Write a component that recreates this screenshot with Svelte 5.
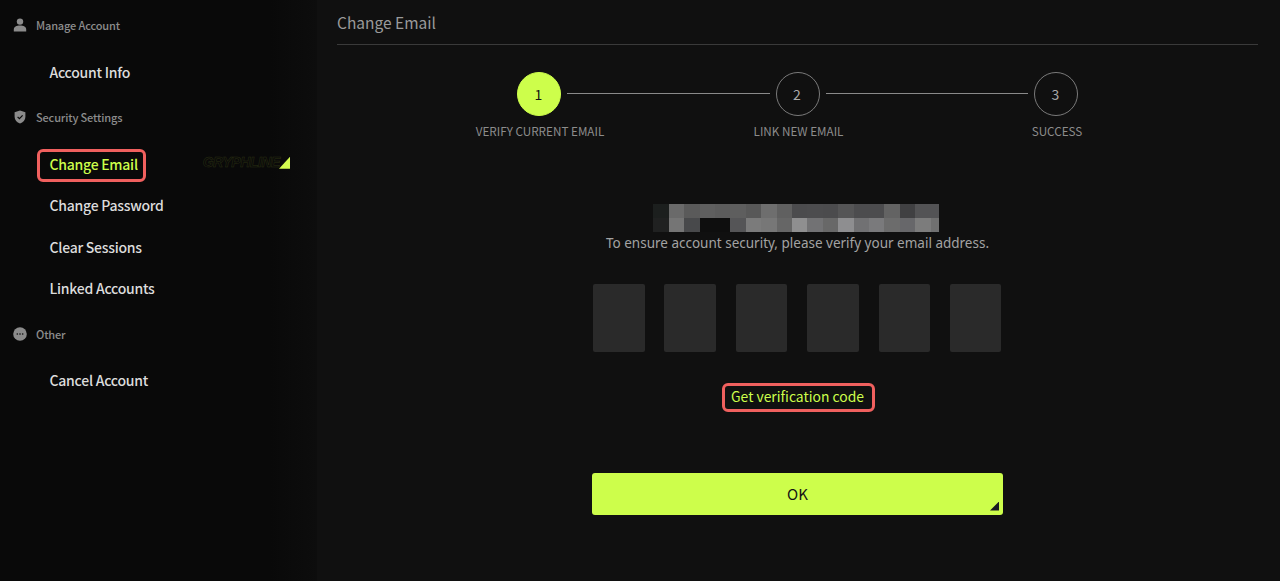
<script>
  const groups = [
    { title: 'Manage Account', icon: 'user', items: ['Account Info'] },
    { title: 'Security Settings', icon: 'shield', items: ['Change Email', 'Change Password', 'Clear Sessions', 'Linked Accounts'] },
    { title: 'Other', icon: 'more', items: ['Cancel Account'] }
  ];
  const steps = ['VERIFY CURRENT EMAIL', 'LINK NEW EMAIL', 'SUCCESS'];
  const mosaic = [
    '#1c1f1e', '#6a6a6a', '#5a5a5a', '#5f5f5f', '#5c5c5c', '#5e5e5e', '#585858', '#6e6e6e', '#606060', '#4b4b4d',
    '#4c4c4e', '#4b4b4d', '#555556', '#4c4c4e', '#4c4c4e', '#636363', '#404042', '#535355', '#535355',
    '#202121', '#757575', '#48494b', '#0e0e0e', '#0e0e0e', '#555557', '#7b7b7b', '#777777', '#666666', '#8f8f90',
    '#727274', '#686868', '#8e8e90', '#717173', '#7a7a7c', '#6c6c6c', '#67676a', '#7c7c7c', '#707070'
  ];
  const codeBoxes = [0, 1, 2, 3, 4, 5];
</script>

<div class="page">
  <aside class="sidebar">
    {#each groups as group}
      <section class="group">
        <h3 class="group-title">
          <span class="group-icon">
            {#if group.icon === 'user'}
              <svg viewBox="0 0 14 14" width="14" height="14">
                <circle cx="7" cy="3.6" r="3.2" fill="#8b8b8b" />
                <path d="M0.8 13.4v-1.9c0-2.6 2.6-3.9 6.2-3.9s6.2 1.3 6.2 3.9v1.9z" fill="#8b8b8b" />
              </svg>
            {:else if group.icon === 'shield'}
              <svg viewBox="0 0 12 14" width="12" height="14">
                <path d="M6 0.4 11.4 2.2v4.6c0 3.2-2.3 5.6-5.4 6.8C2.9 12.4 0.6 10 0.6 6.8V2.2z" fill="#8b8b8b" />
                <path d="M3.6 6.8 5.4 8.6 8.6 5.3" fill="none" stroke="#0b0b0b" stroke-width="1.2" />
              </svg>
            {:else}
              <svg viewBox="0 0 14 14" width="14" height="14">
                <circle cx="7" cy="7" r="6.8" fill="#8b8b8b" />
                <circle cx="4.3" cy="7" r="0.8" fill="#0b0b0b" />
                <circle cx="7" cy="7" r="0.8" fill="#0b0b0b" />
                <circle cx="9.7" cy="7" r="0.8" fill="#0b0b0b" />
              </svg>
            {/if}
          </span>
          {group.title}
        </h3>
        {#each group.items as item}
          <div class="nav-item" class:active={item === 'Change Email'}>
            <span class="nav-label">{item}</span>
            {#if item === 'Change Email'}
              <span class="brand"><span class="brand-text">GRYPHLINE</span><i class="brand-corner"></i></span>
            {/if}
          </div>
        {/each}
      </section>
    {/each}
  </aside>

  <main class="main">
    <h2 class="title">Change Email</h2>

    <div class="stepper">
      {#each steps as step, i}
        {#if i > 0}<div class="line"></div>{/if}
        <div class="step" class:current={i === 0}>
          <div class="circle">{i + 1}</div>
          <div class="step-label">{step}</div>
        </div>
      {/each}
    </div>

    <div class="form">
      <div class="mosaic">
        {#each mosaic as color}
          <i style="background: {color}"></i>
        {/each}
      </div>
      <p class="hint">To ensure account security, please verify your email address.</p>
      <div class="code">
        {#each codeBoxes as box (box)}
          <div class="code-box"></div>
        {/each}
      </div>
      <button class="get-code"><span>Get verification code</span></button>
      <button class="ok">OK<i class="ok-corner"></i></button>
    </div>
  </main>
</div>

<style>
  :global(body) {
    margin: 0;
    background: #101010;
  }

  .page {
    display: flex;
    height: 581px;
    overflow: hidden;
    font-family: "Noto Sans CJK SC", "Noto Sans", sans-serif;
  }

  .sidebar {
    width: 317px;
    flex: none;
    box-sizing: border-box;
    padding: 4px 27px 0 13px;
    background: linear-gradient(90deg, #090909 85%, #0d0d0d);
  }

  .group {
    margin-bottom: 3.5px;
  }

  .group-title {
    display: flex;
    align-items: center;
    height: 42px;
    margin: 0 0 5px;
    font-size: 11px;
    font-weight: 500;
    letter-spacing: -0.15px;
    color: #8c8c8c;
  }

  .group-icon {
    display: flex;
    justify-content: center;
    width: 14px;
    margin-right: 9px;
  }

  .nav-item {
    display: flex;
    align-items: center;
    justify-content: space-between;
    height: 41.5px;
    padding-left: 36.5px;
    font-size: 14px;
    line-height: 20px;
    letter-spacing: -0.25px;
    font-weight: 500;
    color: #dcdcdc;
  }

  .nav-item.active .nav-label {
    position: relative;
    color: #cdfe4b;
  }

  .nav-item.active .nav-label::after {
    content: "";
    position: absolute;
    inset: -5px -8px -8px -13px;
    border: 3px solid #f0605e;
    border-radius: 6px;
  }

  .brand {
    display: flex;
    align-items: flex-end;
    position: relative;
    top: -2px;
  }

  .brand-text {
    font-family: "Liberation Sans", sans-serif;
    font-size: 14px;
    font-style: italic;
    font-weight: 700;
    line-height: 14px;
    letter-spacing: -0.45px;
    color: transparent;
    -webkit-text-stroke: 0.5px #2a3012;
  }

  .brand-corner {
    width: 11px;
    height: 12px;
    margin-left: -1px;
    background: #d3fb4f;
    clip-path: polygon(100% 0, 100% 100%, 0 100%);
  }

  .main {
    flex: 1;
    padding: 0 22px 0 20px;
  }

  .title {
    height: 45px;
    margin: 0;
    box-sizing: border-box;
    border-bottom: 1px solid #3a3a3a;
    padding-top: 10px;
    font-size: 15.5px;
    line-height: 24px;
    font-weight: 400;
    color: #9a9a9a;
  }

  .stepper {
    display: flex;
    align-items: flex-start;
    width: 561px;
    margin: 27px auto 0;
  }

  .step {
    display: flex;
    flex-direction: column;
    align-items: center;
    width: 44px;
    flex: none;
  }

  .circle {
    display: flex;
    align-items: center;
    justify-content: center;
    box-sizing: border-box;
    width: 44px;
    height: 44px;
    padding-right: 1px;
    border: 1px solid #7a7a7a;
    border-radius: 50%;
    font-size: 14px;
    color: #aaaaaa;
  }

  .current .circle {
    border-color: #cdfe4b;
    background: #cdfe4b;
    color: #141414;
  }

  .step-label {
    margin: 6px 0 0 2px;
    font-size: 11.7px;
    line-height: 18px;
    white-space: nowrap;
    color: #8c8c8c;
  }

  .line {
    flex: 1;
    height: 1px;
    margin: 21px 6px 0;
    background: #8a8a8a;
  }

  .form {
    display: flex;
    flex-direction: column;
    align-items: center;
    width: 411px;
    margin: 63.5px auto 0;
  }

  .mosaic {
    display: grid;
    grid-template-columns: repeat(18, 15.4px) 8px;
    grid-auto-rows: 14px;
    flex: none;
    margin-right: 3px;
  }

  .hint {
    margin: 1px -20px 0;
    font-family: "Noto Sans", sans-serif;
    font-size: 13.5px;
    line-height: 20px;
    white-space: nowrap;
    color: #a3a3a3;
  }

  .code {
    display: flex;
    justify-content: space-between;
    box-sizing: border-box;
    width: 100%;
    margin-top: 31px;
    padding: 0 1.5px 0 1px;
  }

  .code-box {
    width: 51.5px;
    height: 68px;
    border-radius: 2px;
    background: #2a2a2a;
  }

  .get-code {
    margin-top: 34.5px;
    padding: 0;
    border: 0;
    background: none;
    font: inherit;
    font-size: 13.9px;
    font-weight: 400;
    line-height: 21px;
    color: #cdfe4b;
  }

  .get-code span {
    display: block;
    position: relative;
  }

  .get-code span::after {
    content: "";
    position: absolute;
    inset: -3px -11px -5px -9px;
    border: 3px solid #f0605e;
    border-radius: 6px;
  }

  .ok {
    position: relative;
    width: 411px;
    height: 42px;
    margin-top: 65.5px;
    padding: 0;
    border: 0;
    border-radius: 3px;
    background: #cdfe4b;
    font: inherit;
    font-size: 15px;
    font-weight: 400;
    color: #141414;
  }

  .ok-corner {
    position: absolute;
    right: 4px;
    bottom: 4px;
    width: 9px;
    height: 9px;
    background: #1a1a22;
    clip-path: polygon(100% 0, 100% 100%, 0 100%);
  }
</style>
